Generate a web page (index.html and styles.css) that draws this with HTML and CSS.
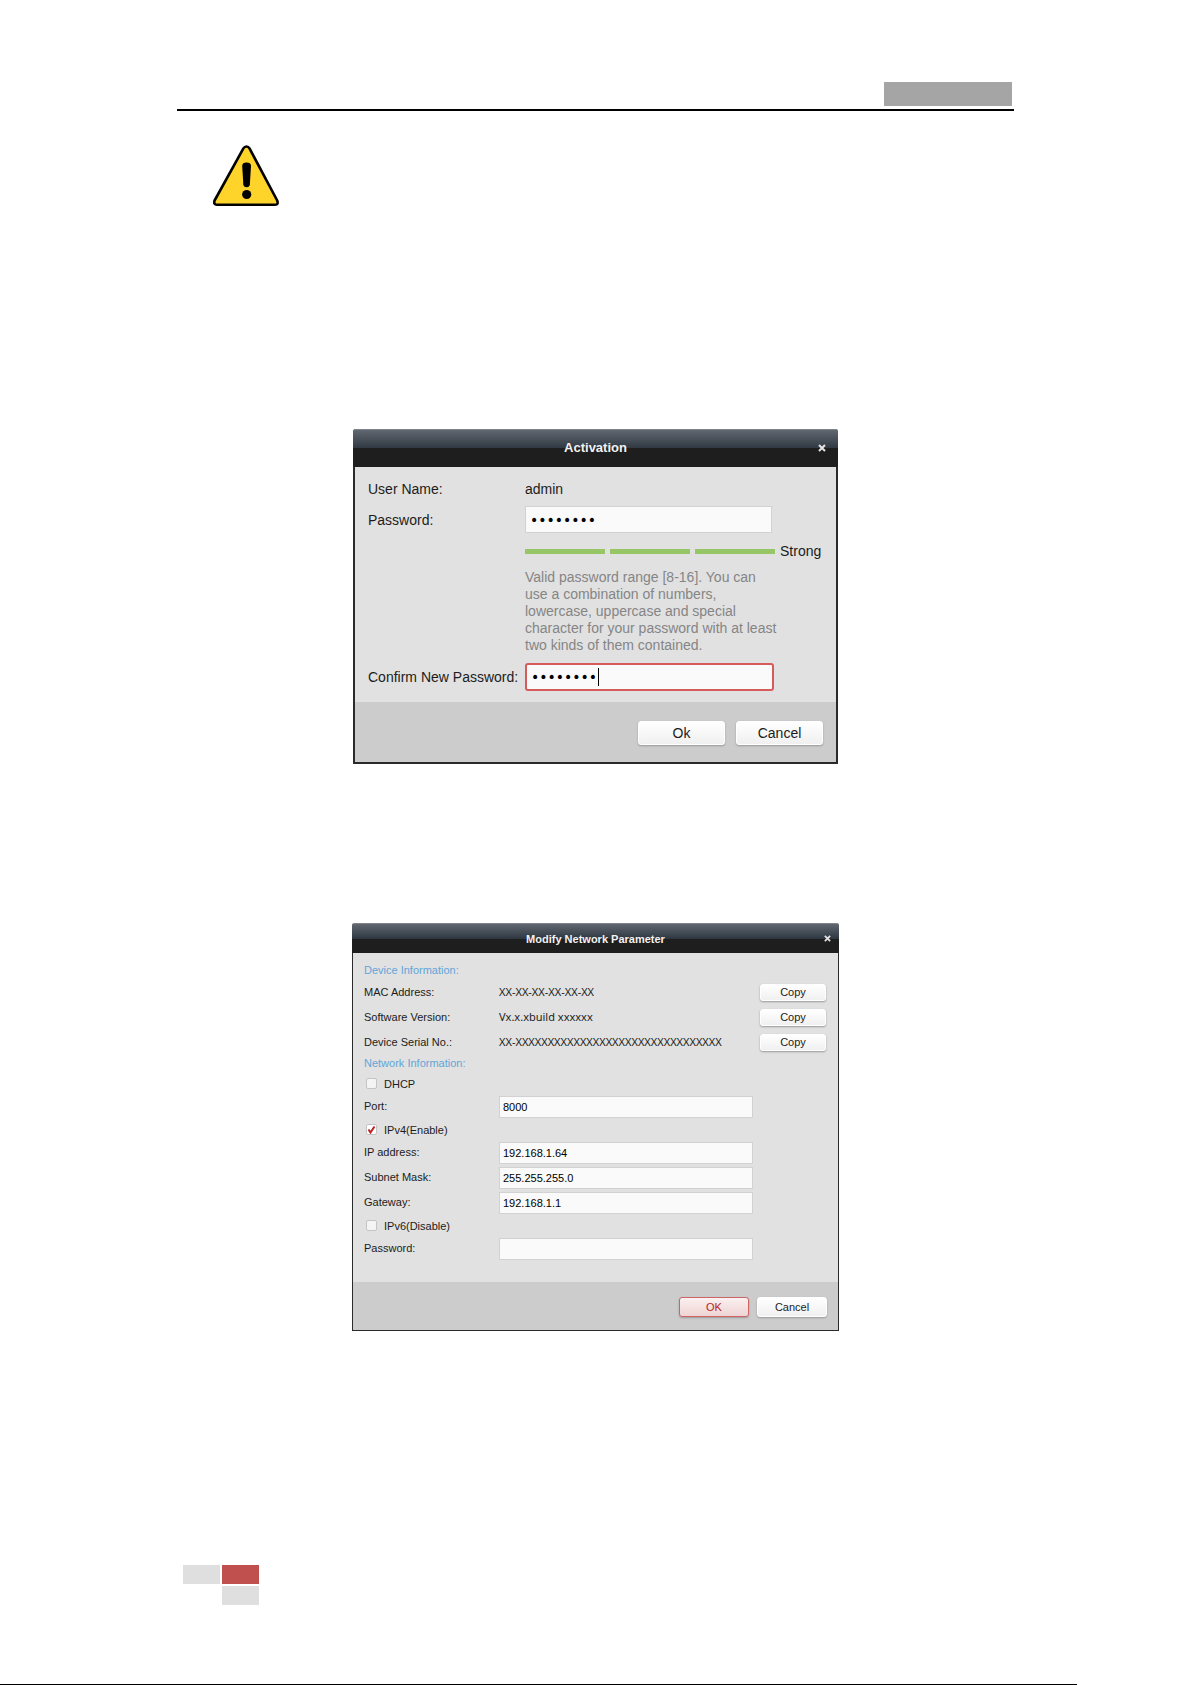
FILE: index.html
```html
<!DOCTYPE html>
<html lang="en">
<head>
    <meta charset="UTF-8">
    <meta name="viewport" content="width=device-width, initial-scale=1.0">
    <title>Activation</title>
    <link rel="stylesheet" href="styles.css">
</head>
<body>
    <div class="page">
        <header class="page-header">
            <div class="tag"></div>
        </header>

        <main class="content">
            <svg class="warning" viewBox="0 0 66 62" role="img" aria-label="Warning">
                <path d="M33.500 1.500q1.900 0 3 1.900L64.200 55.500q1.500 4.300-2 4.300H4q-3.700-.3-2.400-4.300L30.400 3.400q1.200-1.900 3.100-1.900z" fill="#ffd42a" stroke="#000" stroke-width="2.600" stroke-linejoin="round"/>
                <path d="M29.200 21q0-3.400 4.400-3.400T38 21l-1.100 18.200q-.3 3-3.300 3t-3.300-3z"/>
                <circle cx="33.700" cy="49.500" r="4.600"/>
            </svg>

            <form class="dialog activation">
                <div class="titlebar">
                    <h2>Activation</h2>
                    <button type="button" class="close" aria-label="Close">
                        <svg viewBox="0 0 8 8"><path d="M1 1l6 6M7 1L1 7"/></svg>
                    </button>
                </div>
                <div class="body">
                    <span>User Name:</span>
                    <span>admin</span>

                    <label for="password">Password:</label>
                    <input id="password" class="field" type="password" value="12345678">

                    <div class="strength">
                        <i class="bar"></i><i class="bar"></i><i class="bar"></i>
                        <span>Strong</span>
                    </div>

                    <p class="hint">Valid password range [8-16]. You can use a combination of numbers, lowercase, uppercase and special character for your password with at least two kinds of them contained.</p>

                    <label for="confirm">Confirm New Password:</label>
                    <div class="field focused">
                        <input id="confirm" type="password" value="12345678">
                        <i class="caret"></i>
                    </div>
                </div>
                <div class="actions">
                    <button type="button" class="button">Ok</button>
                    <button type="button" class="button">Cancel</button>
                </div>
            </form>

            <form class="dialog network">
                <div class="titlebar">
                    <h2>Modify Network Parameter</h2>
                    <button type="button" class="close" aria-label="Close">
                        <svg viewBox="0 0 8 8"><path d="M1 1l6 6M7 1L1 7"/></svg>
                    </button>
                </div>
                <div class="body">
                    <h3>Device Information:</h3>
                    <div class="row">
                        <span>MAC Address:</span>
                        <span class="value">XX-XX-XX-XX-XX-XX</span>
                        <button type="button" class="button">Copy</button>
                    </div>
                    <div class="row">
                        <span>Software Version:</span>
                        <span class="value">Vx.x.xbuild xxxxxx</span>
                        <button type="button" class="button">Copy</button>
                    </div>
                    <div class="row">
                        <span>Device Serial No.:</span>
                        <span class="value">XX-XXXXXXXXXXXXXXXXXXXXXXXXXXXXXXXX</span>
                        <button type="button" class="button">Copy</button>
                    </div>
                    <h3>Network Information:</h3>
                    <label class="check"><input type="checkbox">DHCP</label>
                    <div class="row">
                        <label for="port">Port:</label>
                        <input id="port" class="field" type="text" value="8000">
                    </div>
                    <label class="check"><input type="checkbox" checked>IPv4(Enable)</label>
                    <div class="row">
                        <label for="ip">IP address:</label>
                        <input id="ip" class="field" type="text" value="192.168.1.64">
                    </div>
                    <div class="row">
                        <label for="mask">Subnet Mask:</label>
                        <input id="mask" class="field" type="text" value="255.255.255.0">
                    </div>
                    <div class="row">
                        <label for="gateway">Gateway:</label>
                        <input id="gateway" class="field" type="text" value="192.168.1.1">
                    </div>
                    <label class="check"><input type="checkbox">IPv6(Disable)</label>
                    <div class="row">
                        <label for="admin-password">Password:</label>
                        <input id="admin-password" class="field" type="password">
                    </div>
                </div>
                <div class="actions">
                    <button type="button" class="button primary">OK</button>
                    <button type="button" class="button">Cancel</button>
                </div>
            </form>
        </main>

        <footer class="page-footer">
            <i class="block"></i>
            <i class="block red"></i>
            <i class="block last"></i>
        </footer>
    </div>
    <div class="rule"></div>
</body>
</html>
```

FILE: styles.css
```css
:root {
    --body-color: #e1e1e1;
    --footer-color: #cccccc;
    --text-color: #1c1c20;
    --muted-color: #858585;
    --heading-color: #62a5d8;
    --green: #97c666;
    --red: #c0504d;
}

* {
    margin: 0;
    padding: 0;
    box-sizing: border-box;
}

body {
    display: flex;
    flex-direction: column;
    min-height: 100vh;
    font-family: "Liberation Sans", Arial, Helvetica, sans-serif;
    background: #ffffff;
    color: var(--text-color);
}

.page {
    flex: 1;
    display: flex;
    flex-direction: column;
    padding: 82px 178px 79px 177px;
}

.page-header {
    display: flex;
    justify-content: flex-end;
    padding: 0 2px 3px;
    border-bottom: 2px solid #000000;
}

.tag {
    width: 128px;
    height: 24px;
    background: #a5a5a5;
}

.content {
    flex: 1;
    display: flex;
    flex-direction: column;
    align-items: center;
    padding-top: 34px;
}

.warning {
    align-self: flex-start;
    width: 66px;
    height: 62px;
    margin-left: 36px;
}

/* Dialogs */
.dialog {
    width: 100%;
    border-radius: 3px 3px 0 0;
    border: 2px solid #2a2a2a;
    border-top: none;
    background: var(--body-color);
}

.titlebar {
    display: grid;
    grid-template-columns: 1fr auto 1fr;
    align-items: center;
    margin: 0 -2px;
    border-top: 1px solid #80838a;
    border-radius: 3px 3px 0 0;
    background: linear-gradient(#616770, #2f3842 50%, #1e1e1e 50%, #1e1e1e);
    color: #f2f2f2;
}

.titlebar h2 {
    grid-column: 2;
    font-weight: 700;
}

.close {
    justify-self: end;
    display: flex;
    border: none;
    background: none;
}

.close svg {
    width: 8px;
    height: 8px;
    fill: none;
    stroke: #e4e4e4;
    stroke-width: 2;
}

.actions {
    display: flex;
    justify-content: flex-end;
    background: var(--footer-color);
}

.button {
    border: 1px solid #ffffff;
    border-radius: 3px;
    background: linear-gradient(#ffffff, #f0f0f0);
    box-shadow: 0 1px 2px #999999;
    color: inherit;
    font: inherit;
}

.button.primary {
    border-color: #cc6666;
    background: linear-gradient(#fbf0f0, #efd4d4);
    color: #b82222;
}

.field {
    border: 1px solid #d2d2d2;
    background: #fafafa;
    color: #000000;
    font: inherit;
    outline: none;
}

/* Activation */
.activation {
    max-width: 485px;
    margin-top: 222px;
    font-size: 14px;
}

.activation .titlebar {
    height: 38px;
    padding: 0 12px 2px;
}

.activation h2 {
    font-size: 13px;
}

.activation .body {
    display: grid;
    grid-template-columns: 157px 1fr;
    row-gap: 8px;
    align-items: center;
    padding: 13px 13px 11px;
    line-height: 18px;
}

.activation .field {
    width: 247px;
    height: 27px;
    padding: 0 4px;
}

.activation input {
    font-family: "DejaVu Sans", sans-serif;
    font-size: 14px;
}

.activation .focused {
    display: flex;
    align-items: center;
    width: 249px;
    height: 28px;
    border: 2px solid #d65c5c;
    border-radius: 3px;
}

.focused input {
    width: 67px;
    border: none;
    background: none;
    outline: none;
}

.caret {
    width: 1px;
    height: 18px;
    background: #000000;
}

.strength {
    grid-column: 2;
    display: flex;
    align-items: center;
    gap: 5px;
    height: 20px;
}

.bar {
    width: 80px;
    height: 5px;
    background: var(--green);
}

.hint {
    grid-column: 2;
    width: 256px;
    padding-bottom: 1px;
    color: var(--muted-color);
    line-height: 17px;
}

.activation .actions {
    gap: 11px;
    padding: 19px 13px 17px;
}

.activation .button {
    width: 87px;
    height: 24px;
}

/* Modify network parameter */
.network {
    max-width: 487px;
    margin-top: 159px;
    border-width: 1px;
    font-size: 11px;
    line-height: 16px;
}

.network .titlebar {
    height: 30px;
    margin: 0 -1px;
    padding: 0 8px;
}

.network h2 {
    font-size: 11px;
}

.network .close svg {
    width: 7px;
    height: 7px;
}

.network .body {
    padding: 9px 12px 21px 11px;
}

.network h3 {
    height: 18px;
    color: var(--heading-color);
    font-size: 11px;
    font-weight: 400;
}

.row {
    display: grid;
    grid-template-columns: 135px 254px 1fr;
    align-items: center;
    height: 25px;
}

.row span,
.row label {
    padding-bottom: 2px;
}

.value {
    font-family: "Noto Sans", sans-serif;
}

.row .button {
    justify-self: end;
    width: 66px;
    height: 17px;
    line-height: 15px;
}

.network .field {
    height: 22px;
    padding: 1px 3px 0;
}

.check {
    display: flex;
    align-items: center;
    gap: 7px;
    height: 21px;
    padding-left: 2px;
}

.check input {
    appearance: none;
    width: 11px;
    height: 11px;
    border: 1px solid #c4c4c4;
    border-radius: 2px;
    background: #f4f4f4;
}

.check input:checked {
    background: #ffffff url("data:image/svg+xml,%3Csvg xmlns='http://www.w3.org/2000/svg' viewBox='0 0 9 9'%3E%3Cpath d='M1.500 4.500l2 3L7.500 1.500' fill='none' stroke='%23c02020' stroke-width='2'/%3E%3C/svg%3E") center / 9px 9px no-repeat;
}

.network .actions {
    gap: 8px;
    padding: 15px 11px 13px;
}

.network .actions .button {
    width: 70px;
    height: 20px;
}

/* Page footer blocks */
.page-footer {
    display: grid;
    grid-template-columns: 37px 37px;
    gap: 2px;
    padding-left: 6px;
}

.block {
    height: 19px;
    background: #dfdfdf;
}

.block.red {
    background: var(--red);
}

.block.last {
    grid-column: 2;
}

.rule {
    height: 1px;
    margin-right: 115px;
    background: #000000;
}
```
